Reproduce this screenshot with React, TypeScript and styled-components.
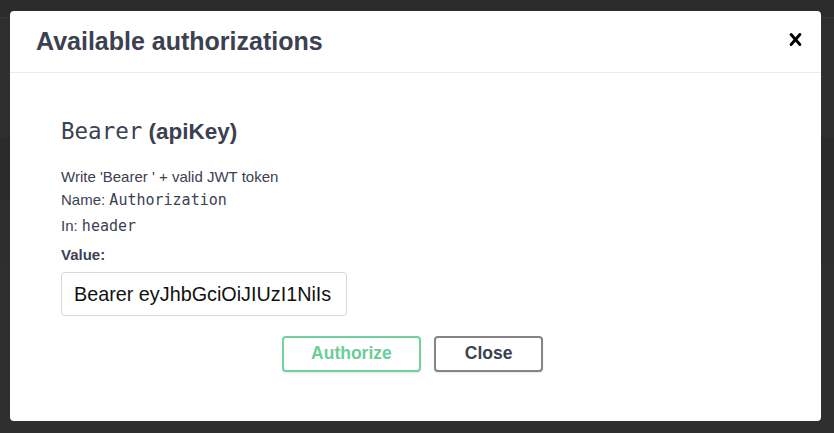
import React from "react";
import styled, { createGlobalStyle } from "styled-components";

const GlobalStyle = createGlobalStyle`
  html, body {
    margin: 0;
    padding: 0;
    background: #2e2e2e;
  }
  * { box-sizing: border-box; }
`;

const Backdrop = styled.div`
  width: 834px;
  height: 433px;
  padding: 11px 0 0 10px;
  overflow: hidden;
  background:
    linear-gradient(
      to bottom,
      #2c2c2c 0px,
      #2c2c2c 17px,
      #3a3a3a 17px,
      #3a3a3a 18px,
      #2e2e2e 18px,
      #2e2e2e 24px,
      #2b3631 24px,
      #2b3631 25px,
      #2f2f2f 25px,
      #2f2f2f 73px,
      #23362c 73px,
      #23362c 74px,
      #2f2f2f 74px,
      #2f2f2f 137px,
      #2b2b2b 137px,
      #2b2b2b 200px,
      #2d2d2d 200px,
      #2d2d2d 264px,
      #2f2f2f 264px
    );
`;

const Modal = styled.div`
  width: 811px;
  height: 410px;
  background: #ffffff;
  border-radius: 4px;
  display: flex;
  flex-direction: column;
  font-family: "Liberation Sans", Arial, sans-serif;
  color: #3b4151;
`;

const Header = styled.div`
  height: 62px;
  flex: none;
  border-bottom: 1px solid #ebebeb;
  display: flex;
  align-items: center;
  justify-content: space-between;
  padding: 0 13px 0 26px;
`;

const Title = styled.h3`
  margin: 0;
  font-size: 25px;
  font-weight: 700;
  color: #3b4151;
  line-height: 29px;
`;

const CloseIcon = styled.button`
  border: none;
  background: none;
  padding: 0;
  width: 25px;
  height: 25px;
  margin-bottom: 4px;
  display: flex;
  align-items: center;
  justify-content: center;
  cursor: pointer;
`;

const Body = styled.div`
  padding: 44px 51px 0 51px;
  display: flex;
  flex-direction: column;
`;

const SchemeTitle = styled.h4`
  margin: 0;
  font-size: 22.5px;
  line-height: 28px;
  font-weight: 700;
  color: #3b4151;
`;

const Code = styled.code<{ $size?: number }>`
  font-family: "DejaVu Sans Mono", "Liberation Mono", monospace;
  font-weight: 400;
  font-size: ${(p) => p.$size ?? 15}px;
  color: #3b4151;
`;

const Line = styled.p<{ $gap: number }>`
  margin: ${(p) => p.$gap}px 0 0 0;
  font-size: 15px;
  line-height: 20px;
  color: #3b4151;
`;

const Label = styled.label`
  margin-top: 8.6px;
  font-size: 15px;
  line-height: 20px;
  font-weight: 700;
  color: #3b4151;
`;

const Input = styled.input`
  margin-top: 7.6px;
  width: 286px;
  height: 44px;
  border: 1px solid #d9d9d9;
  border-radius: 4px;
  padding: 0 8px 0 12px;
  font-family: "Liberation Sans", Arial, sans-serif;
  font-size: 19.8px;
  color: #111111;
  background: #fff;
  outline: none;
`;

const ButtonRow = styled.div`
  margin-top: 19.5px;
  display: flex;
  justify-content: center;
  gap: 12.5px;
  padding-right: 6px;
`;

const Button = styled.button<{ $variant: "authorize" | "close" }>`
  height: 36px;
  padding: 0 ${(p) => (p.$variant === "authorize" ? 27.5 : 29)}px;
  border-radius: 4px;
  background: #fff;
  font-family: "Liberation Sans", Arial, sans-serif;
  font-size: 17.5px;
  font-weight: 700;
  cursor: pointer;
  border: 2px solid
    ${(p) => (p.$variant === "authorize" ? "#74d0a0" : "#858585")};
  color: ${(p) => (p.$variant === "authorize" ? "#6ccd98" : "#3b4151")};
  box-shadow: 0 1px 2px rgba(0, 0, 0, 0.1);
`;

export default function App() {
  return (
    <>
      <GlobalStyle />
      <Backdrop>
        <Modal>
          <Header>
            <Title>Available authorizations</Title>
            <CloseIcon aria-label="Close">
              <svg width="25" height="25" viewBox="0 0 20 20" fill="#000">
                <path d="M14.348 14.849a1.2 1.2 0 0 1-1.697 0L10 11.819l-2.651 3.029a1.2 1.2 0 1 1-1.697-1.697l2.758-3.15-2.759-3.152a1.2 1.2 0 1 1 1.697-1.697L10 8.183l2.651-3.031a1.2 1.2 0 1 1 1.697 1.697l-2.758 3.152 2.758 3.15a1.2 1.2 0 0 1 0 1.698z" />
              </svg>
            </CloseIcon>
          </Header>
          <Body>
            <SchemeTitle>
              <Code $size={22.5}>Bearer</Code> (apiKey)
            </SchemeTitle>
            <Line $gap={20.6}>Write 'Bearer ' + valid JWT token</Line>
            <Line $gap={3}>
              Name: <Code>Authorization</Code>
            </Line>
            <Line $gap={6.7}>
              In: <Code>header</Code>
            </Line>
            <Label htmlFor="auth-value">Value:</Label>
            <Input
              id="auth-value"
              type="text"
              defaultValue="Bearer eyJhbGciOiJIUzI1NiIs"
            />
            <ButtonRow>
              <Button $variant="authorize">Authorize</Button>
              <Button $variant="close">Close</Button>
            </ButtonRow>
          </Body>
        </Modal>
      </Backdrop>
    </>
  );
}
